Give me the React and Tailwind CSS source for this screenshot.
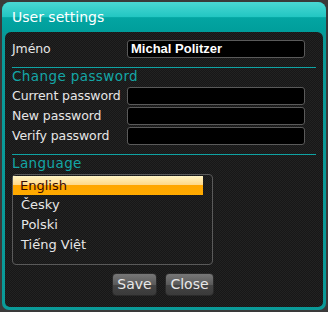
import React from "react";

const font = { fontFamily: '"DejaVu Sans", "Noto Sans", sans-serif' };

function Field({ label, value }) {
  return (
    <div className="flex h-[18px] items-center">
      <div className="w-[115px] whitespace-nowrap text-[12.5px] tracking-[-0.1px] text-[#e6e6e6]">{label}</div>
      <div className="flex h-[18px] w-[178px] items-center rounded-[3px] border border-[#5a5a5a] bg-black px-[3px] text-[13px] font-bold text-white [font-family:'Liberation_Sans',sans-serif]">
        {value}
      </div>
    </div>
  );
}

function Heading({ children }) {
  return (
    <div className="mt-[9px] border-t border-[#0fa3a3] pt-[1px] text-[13.5px] leading-[15px] tracking-[0.4px] text-[#14a6a6]">
      {children}
    </div>
  );
}

export default function App() {
  const langs = ["English", "Česky", "Polski", "Tiếng Việt"];
  return (
    <div className="h-[312px] w-[328px] bg-[#3a3a3a] p-[2px]" style={font}>
      <div className="flex h-full flex-col rounded-t-[8px] rounded-b-[7px] bg-[#0a9a98]">
        <div className="flex h-[30px] items-center rounded-t-[8px] bg-[linear-gradient(to_bottom,#4ad8d4_0%,#22c6c2_50%,#03a5a2_52%,#009e9b_100%)] pl-[10px] text-[14px] text-white">
          User settings
        </div>
        <div className="mx-[3px] mb-[3px] flex flex-1 flex-col rounded-t-[6px] rounded-b-[5px] bg-[#1c1c1c] bg-[repeating-conic-gradient(#222222_0_25%,#171717_0_50%)] bg-[length:2px_2px] px-[7px] pt-[8px]">
          <Field label="Jméno" value="Michal Politzer" />
          <Heading>Change password</Heading>
          <div className="mt-[3px] flex flex-col gap-[2px]">
            <Field label="Current password" value="" />
            <Field label="New password" value="" />
            <Field label="Verify password" value="" />
          </div>
          <Heading>Language</Heading>
          <div className="mt-[3px] h-[91px] w-[201px] rounded-[4px] border border-[#5a5a5a] pt-[1px]">
            {langs.map((l, i) => (
              <div
                key={l}
                className={
                  i === 0
                    ? "flex h-[19px] w-[190px] items-center bg-[linear-gradient(to_bottom,#fff4c4_0%,#ffd98a_45%,#ffa600_50%,#ffab00_100%)] pl-[7px] text-[13px] text-[#3a0a00]"
                    : "flex h-[20px] items-center pl-[8px] text-[13px] text-[#e6e6e6]"
                }
              >
                {l}
              </div>
            ))}
          </div>
          <div className="mt-[8px] flex justify-center gap-[8px] pr-[2px]">
            <button className="h-[23px] w-[45px] rounded-[4px] border border-[#2a2a2a] bg-[linear-gradient(to_bottom,#777_0%,#5a5a5a_50%,#444_52%,#3a3a3a_100%)] text-[14px] text-[#e8e8e8]">
              Save
            </button>
            <button className="h-[23px] w-[49px] rounded-[4px] border border-[#2a2a2a] bg-[linear-gradient(to_bottom,#777_0%,#5a5a5a_50%,#444_52%,#3a3a3a_100%)] text-[14px] text-[#e8e8e8]">
              Close
            </button>
          </div>
        </div>
      </div>
    </div>
  );
}
